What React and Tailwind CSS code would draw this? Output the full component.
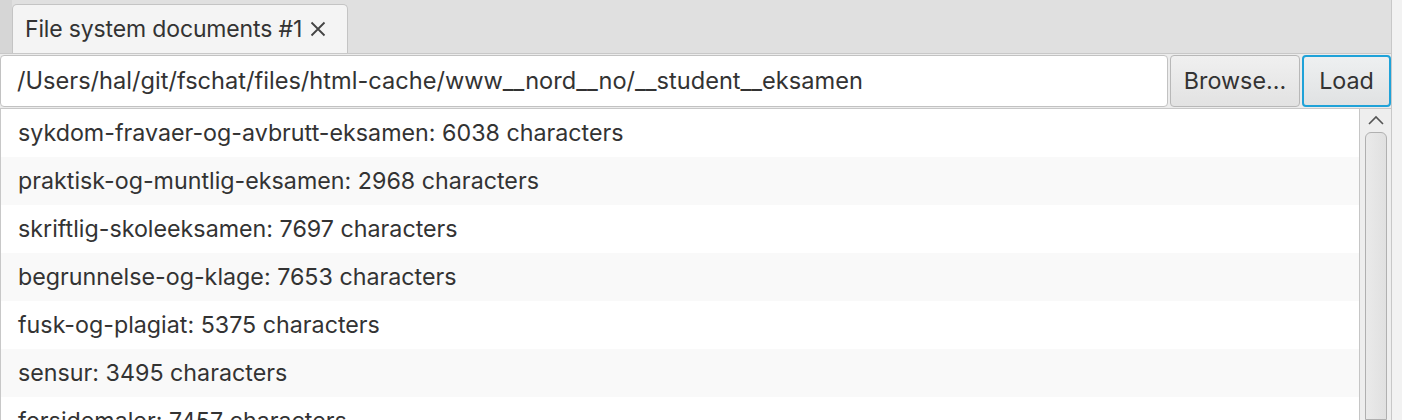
import React from "react";

const docs = [
  ["sykdom-fravaer-og-avbrutt-eksamen", 6038],
  ["praktisk-og-muntlig-eksamen", 2968],
  ["skriftlig-skoleeksamen", 7697],
  ["begrunnelse-og-klage", 7653],
  ["fusk-og-plagiat", 5375],
  ["sensur", 3495],
  ["forsidemaler", 7457],
];

export default function App() {
  return (
    <div
      className="w-[1402px] h-[420px] overflow-hidden bg-[#f2f2f2] flex text-[#333333]"
      style={{ fontFamily: "Inter, 'Noto Sans', sans-serif" }}
    >
      <div className="w-[1392px] flex flex-col border-r border-[#c8c8c8]">
        {/* tab header */}
        <div className="h-[53px] shrink-0 bg-[#e0e0e0] flex items-end border-l-[12px] border-[#d6d6d6]">
          <div className="h-[49px] w-[336px] pl-[12px] flex items-center gap-[8px] bg-[#f4f4f4] border border-b-0 border-[#c4c4c4] rounded-t-[5px] text-[23px] tracking-[-0.15px]">
            <span>File system documents #1</span>
            <svg width="16" height="16" viewBox="0 0 16 16">
              <path d="M1.5 1.5 L14.5 14.5 M14.5 1.5 L1.5 14.5" stroke="#444" strokeWidth="1.8" fill="none" />
            </svg>
          </div>
        </div>

        {/* path bar */}
        <div className="h-[55px] shrink-0 bg-[#ececec] flex items-stretch gap-[2px] pt-[1px] pb-[1px] border-t border-[#c8c8c8]">
          <div className="flex-1 bg-white border border-[#c2c2c2] rounded-[4px] flex items-center pl-[16px] text-[23.6px]">
            /Users/hal/git/fschat/files/html-cache/www__nord__no/__student__eksamen
          </div>
          <button className="w-[130px] rounded-[4px] border border-[#b8b8b8] bg-gradient-to-b from-[#f0f0f0] to-[#e2e2e2] text-[23.3px]">
            Browse...
          </button>
          <button className="w-[89px] rounded-[4px] border-2 border-[#1fa2d8] bg-gradient-to-b from-[#eef0f1] to-[#e0e2e3] text-[23.3px]">
            Load
          </button>
        </div>

        {/* list */}
        <div className="flex-1 min-h-0 flex border-t border-[#c8c8c8] bg-white">
          <div className="flex-1 flex flex-col border-l border-[#c8c8c8]">
            {docs.map(([name, n], i) => (
              <div
                key={name}
                className={`h-[48px] shrink-0 flex items-center pl-[17px] text-[23.25px] ${
                  i % 2 === 1 ? "bg-[#f9f9f9]" : "bg-white"
                }`}
              >
                {name}: {n} characters
              </div>
            ))}
          </div>
          <div className="w-[32px] bg-[#eeeeee] border-l border-[#c6c6c6] flex flex-col items-center">
            <svg width="20" height="14" viewBox="0 0 20 14" className="mt-[4px]">
              <path d="M3 11 L10 4 L17 11" fill="none" stroke="#555" strokeWidth="1.6" />
            </svg>
            <div className="mt-[5px] w-[22px] flex-1 rounded-t-[6px] border border-[#b0b0b0] bg-gradient-to-r from-[#eaeaea] to-[#e0e0e0]" />
          </div>
        </div>
      </div>
    </div>
  );
}
